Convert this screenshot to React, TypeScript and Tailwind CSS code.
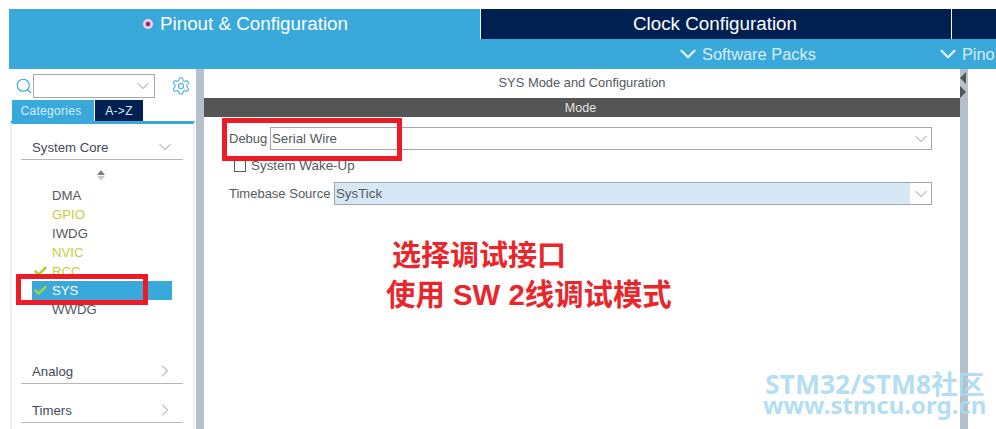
import { Check, ChevronDown, ChevronRight, Search, Settings } from 'lucide-react';

const peripherals = [
  { name: 'DMA', color: 'text-[#55595c]' },
  { name: 'GPIO', color: 'text-[#c3cf3e]' },
  { name: 'IWDG', color: 'text-[#55595c]' },
  { name: 'NVIC', color: 'text-[#c3cf3e]' },
  { name: 'RCC', color: 'text-[#c3cf3e]', checked: true },
  { name: 'SYS', color: 'text-white', checked: true, selected: true },
  { name: 'WWDG', color: 'text-[#55595c]' },
];

function Combo({ label, value, labelWidth, filled }: { label: string; value: string; labelWidth: string; filled?: boolean }) {
  return (
    <div className="flex items-center h-[23px]">
      <span className={`${labelWidth} shrink-0 whitespace-nowrap text-[13px] text-[#55595c]`}>{label}</span>
      <div className="flex-1 h-full flex border border-[#a5a8aa] bg-white">
        <div className={`flex-1 flex items-center pl-[1px] text-[13.3px] text-[#55595c] ${filled ? 'bg-[#d6e7f5]' : ''}`}>{value}</div>
        <div className="w-[21px] flex items-center justify-center">
          <ChevronDown size={20} strokeWidth={0.8} className="text-[#55595c]" />
        </div>
      </div>
    </div>
  );
}

function Category({ name, open }: { name: string; open?: boolean }) {
  return (
    <div className="ml-[9px] mr-[10px] h-[26px] flex items-center justify-between border-b border-[#b4b7b9] pl-[11px] pr-[8px] text-[13.2px] text-[#3f4a5a]">
      <span className="pt-[3px]">{name}</span>
      {open ? (
        <ChevronDown size={20} strokeWidth={0.8} className="text-[#55595c]" />
      ) : (
        <ChevronRight size={20} strokeWidth={0.8} className="text-[#55595c]" />
      )}
    </div>
  );
}

export default function App() {
  return (
    <div className="relative w-[996px] h-[429px] overflow-hidden bg-white font-['Liberation_Sans','Noto_Sans_CJK_SC',sans-serif]">
      <div className="pt-[9px] pl-[9px] h-full flex flex-col">
        {/* top tabs */}
        <div className="flex h-[30px] shrink-0 text-[18.8px] leading-[30px] whitespace-nowrap">
          <div className="w-[471px] bg-[#39a8db] flex items-center justify-center gap-[7px] pl-[2px] text-white">
            <span className="w-[10px] h-[10px] rounded-full bg-[#e58ad0] border-[2px] border-[#f6d5ee] flex items-center justify-center">
              <span className="w-[4px] h-[4px] rounded-full bg-[#7a2a70]" />
            </span>
            <span>Pinout &amp; Configuration</span>
          </div>
          <div className="w-[472px] bg-[#002052] border-l border-white border-r flex items-center justify-center pr-[2px] text-white">
            Clock Configuration
          </div>
          <div className="flex-1 bg-[#002052]" />
        </div>
        {/* sub tabs */}
        <div className="flex h-[30px] shrink-0 bg-[#39a8db] text-[16.4px] text-[#d9eef8] items-center whitespace-nowrap">
          <div className="ml-[666px] flex items-center gap-[1px]">
            <ChevronDown size={26} strokeWidth={2} className="text-[#e6f4fb]" />
            <span>Software Packs</span>
          </div>
          <div className="ml-[119px] flex items-center gap-[1px]">
            <ChevronDown size={26} strokeWidth={2} className="text-[#e6f4fb]" />
            <span>Pino</span>
          </div>
        </div>

        <div className="flex flex-1 min-h-0">
          {/* left panel */}
          <div className="w-[187px] shrink-0 flex flex-col">
            <div className="flex items-center h-[31px] pl-[6px] pt-[2px]">
              <Search size={18} strokeWidth={1.5} className="text-[#39a8db]" />
              <div className="w-[122px] h-[24px] border border-[#a5a8aa] flex items-center justify-end pr-[1px]">
                <ChevronDown size={20} strokeWidth={0.8} className="text-[#55595c]" />
              </div>
              <Settings size={20} strokeWidth={1.25} className="ml-[16px] text-[#39a8db]" />
            </div>
            <div className="flex h-[21px] ml-[3px] text-[12px] tracking-[0.3px]">
              <div className="w-[82px] bg-[#39a8db] text-[#d9eef8] flex items-center justify-center pr-[4px]">Categories</div>
              <div className="ml-[1px] w-[48px] bg-[#002052] text-[#d9eef8] flex items-center justify-center">A-&gt;Z</div>
            </div>
            <div className="flex-1 border-t-[3px] border-[#39a8db] mx-[1px] border-x-[2px] border-x-[#eef1f3]">
              <div className="mt-[10px]">
                <Category name="System Core" open />
              </div>
              <div className="flex justify-center pr-[4px] mt-[10px] h-[12px]">
                <div className="flex flex-col items-center gap-[1px]">
                  <span className="w-0 h-0 border-x-[4px] border-x-transparent border-b-[5px] border-b-[#7a7f83]" />
                  <span className="w-0 h-0 border-x-[4px] border-x-transparent border-t-[5px] border-t-[#c9cdd0]" />
                </div>
              </div>
              <div className="mt-[4px] ml-[20px] mr-[21px] text-[13.2px]">
                {peripherals.map((p) => (
                  <div key={p.name} className={`relative h-[19px] flex items-center pl-[20px] ${p.selected ? 'bg-[#39a8db]' : ''} ${p.color}`}>
                    {p.checked && <Check size={15} strokeWidth={4} className="absolute left-[1px] top-[2px] text-[#a9cf3e]" />}
                    {p.name}
                  </div>
                ))}
              </div>
              <div className="mt-[39px]">
                <Category name="Analog" />
              </div>
              <div className="mt-[13px]">
                <Category name="Timers" />
              </div>
            </div>
          </div>

          {/* splitter */}
          <div className="w-[8px] shrink-0 bg-[#b4c1ca]" />

          {/* main panel */}
          <div className="w-[756px] shrink-0 flex flex-col">
            <div className="h-[29px] flex items-center justify-center pb-[2px] text-[12.9px] text-[#55595c]">SYS Mode and Configuration</div>
            <div className="h-[19px] bg-[#555555] flex items-center justify-center pr-[3px] pt-[1px] text-[12.5px] text-[#e6e6e6]">Mode</div>
            <div className="pl-[25px] pr-[28px] pt-[10px]">
              <Combo label="Debug" value="Serial Wire" labelWidth="w-[41px]" />
              <div className="h-[32px] flex items-center pl-[5px] gap-[5px] text-[13.4px] text-[#55595c]">
                <span className="w-[12px] h-[12px] border border-[#55595c] bg-white" />
                <span>System Wake-Up</span>
              </div>
              <Combo label="Timebase Source" value="SysTick" labelWidth="w-[105px]" filled />
            </div>
          </div>

          {/* right splitter */}
          <div className="relative w-[8px] shrink-0 bg-[#b4c1ca]">
            <span className="absolute left-[0px] top-[3px] w-0 h-0 border-y-[6px] border-y-transparent border-r-[6px] border-r-[#555555]" />
            <span className="absolute left-[0px] top-[17px] w-0 h-0 border-y-[6px] border-y-transparent border-l-[6px] border-l-[#555555]" />
          </div>
          <div className="flex-1" />
        </div>
      </div>

      {/* annotations drawn over the screenshot */}
      <div className="absolute left-[222px] top-[118px] w-[180px] h-[43px] border-[5px] border-[#ed1c24]" />
      <div className="absolute left-[16px] top-[274px] w-[132px] h-[31px] border-[5px] border-[#ed1c24]" />
      <div className="absolute left-[392px] top-[238px] text-[29px] leading-[36px] font-bold text-[#e8262b] whitespace-nowrap">选择调试接口</div>
      <div className="absolute left-[386px] top-[277px] text-[29.4px] leading-[36px] font-bold text-[#e8262b] whitespace-nowrap">使用 SW 2线调试模式</div>
      <div className="absolute left-[765px] top-[373px] text-[26.5px] leading-[22px] font-bold text-[#a9daf2]/90 whitespace-nowrap font-['Noto_Sans','Noto_Sans_CJK_SC',sans-serif]">STM32/STM8社区</div>
      <div className="absolute left-[763px] top-[395px] text-[24px] leading-[20px] font-bold text-[#a9daf2]/90 whitespace-nowrap font-['Noto_Sans',sans-serif]">www.stmcu.org.cn</div>
    </div>
  );
}
